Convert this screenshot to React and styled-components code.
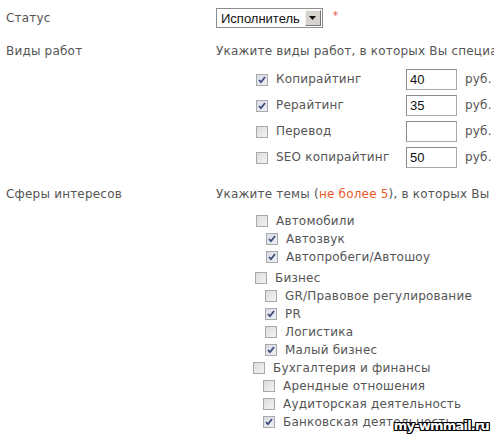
import React from 'react';
import styled, { createGlobalStyle } from 'styled-components';

const GlobalStyle = createGlobalStyle`
  html, body {
    margin: 0;
    padding: 0;
    background: #fff;
    overflow: hidden;
  }
  body {
    font-family: "DejaVu Sans", Verdana, sans-serif;
    font-size: 12px;
    letter-spacing: 0.2px;
    color: #555;
  }
`;

const Page = styled.div`
  position: relative;
  width: 494px;
  height: 435px;
  overflow: hidden;
  padding: 8px 0 0 6px;
  box-sizing: border-box;
`;

const FieldRow = styled.div`
  display: grid;
  grid-template-columns: 210px 1fr;
  align-items: ${(p) => (p.center ? 'center' : 'start')};
  margin-top: ${(p) => p.top || 0}px;
  line-height: 15px;
  white-space: nowrap;
`;

const Label = styled.div`
  color: #555;
`;

const Field = styled.div`
  display: flex;
  flex-direction: column;
  min-width: 0;
`;

const SelectBox = styled.div`
  display: flex;
  align-items: center;
  gap: 10px;
`;

const FakeSelect = styled.div`
  display: flex;
  align-items: center;
  height: 18px;
  border: 1px solid #8e8e8e;
  background: #fff;
  padding: 0 1px 0 4px;
  font-family: "Liberation Sans", Arial, sans-serif;
  font-size: 13px;
  letter-spacing: 0;
  color: #111;
  gap: 5px;
`;

const ArrowButton = styled.div`
  width: 14px;
  height: 14px;
  background: #d6d3ce;
  border: 1px solid;
  border-color: #f4f4f4 #7a7a7a #7a7a7a #f4f4f4;
  display: flex;
  align-items: center;
  justify-content: center;
`;

const Required = styled.span`
  color: #e0583a;
  font-size: 11px;
  line-height: 1;
  margin-top: -6px;
`;

const Hint = styled.div`
  color: #555;
`;

const Accent = styled.span`
  color: #e65a2a;
`;

const WorkList = styled.div`
  display: flex;
  flex-direction: column;
  gap: 5px;
  margin-top: 10px;
  padding-left: 40px;
`;

const WorkRow = styled.div`
  display: grid;
  grid-template-columns: 12px 122px 51px auto;
  column-gap: 8px;
  align-items: center;
  height: 21px;
`;

const PriceInput = styled.input`
  width: 51px;
  height: 21px;
  box-sizing: border-box;
  border: 1px solid #a8a8a8;
  border-top-color: #8a8a8a;
  border-left-color: #8a8a8a;
  padding: 0 3px;
  font-family: "Liberation Sans", Arial, sans-serif;
  font-size: 13px;
  color: #111;
  outline: none;
`;

const Currency = styled.span`
  color: #555;
`;

const Tree = styled.div`
  display: flex;
  flex-direction: column;
  margin-top: 10px;
  padding-left: ${(p) => p.indent}px;
`;

const Group = styled.div`
  display: flex;
  flex-direction: column;
  margin-top: ${(p) => p.gap || 0}px;
  margin-left: ${(p) => p.shift || 0}px;
`;

const TreeItem = styled.div`
  display: flex;
  align-items: center;
  gap: 8px;
  height: 18px;
  padding-left: ${(p) => (p.child ? 10 : 0)}px;
`;

const Box = styled.span`
  flex: none;
  width: 12px;
  height: 12px;
  box-sizing: border-box;
  border: 1px solid #a9a9a9;
  background: ${(p) =>
    p.checked
      ? 'linear-gradient(135deg, #d9dbe6 0%, #eef0f6 100%)'
      : 'linear-gradient(135deg, #dcdcdc 0%, #f3f3f3 100%)'};
  display: flex;
  align-items: center;
  justify-content: center;
`;

const Watermark = styled.div`
  position: absolute;
  right: 5px;
  bottom: 2px;
  font-family: "DejaVu Sans", sans-serif;
  font-weight: bold;
  font-size: 13px;
  letter-spacing: -0.8px;
  color: #fff;
  text-shadow: -1px -1px 0 #000, 1px -1px 0 #000, -1px 1px 0 #000,
    1px 1px 0 #000, 0 1px 0 #000, 0 -1px 0 #000, 1px 0 0 #000, -1px 0 0 #000;
`;

const Check = ({ checked }) => (
  <Box checked={checked}>
    {checked && (
      <svg width="8" height="8" viewBox="0 0 8 8">
        <path d="M1 4 L3 6.2 L7 1" fill="none" stroke="#3d4a7a" strokeWidth="1.8" />
      </svg>
    )}
  </Box>
);

const works = [
  { name: 'Копирайтинг', price: '40', checked: true },
  { name: 'Рерайтинг', price: '35', checked: true },
  { name: 'Перевод', price: '', checked: false },
  { name: 'SEO копирайтинг', price: '50', checked: false },
];

const topics = [
  {
    name: 'Автомобили',
    gap: 0,
    shift: 0,
    items: [
      { name: 'Автозвук', checked: true },
      { name: 'Автопробеги/Автошоу', checked: true },
    ],
  },
  {
    name: 'Бизнес',
    gap: 3,
    shift: -1,
    items: [
      { name: 'GR/Правовое регулирование', checked: false },
      { name: 'PR', checked: true },
      { name: 'Логистика', checked: false },
      { name: 'Малый бизнес', checked: true },
    ],
  },
  {
    name: 'Бухгалтерия и финансы',
    gap: 0,
    shift: -3,
    items: [
      { name: 'Арендные отношения', checked: false },
      { name: 'Аудиторская деятельность', checked: false },
      { name: 'Банковская деятельность', checked: true },
    ],
  },
];

const App = () => {
  return (
    <Page>
      <GlobalStyle />

      <FieldRow center>
        <Label>Статус</Label>
        <SelectBox>
          <FakeSelect>
            Исполнитель
            <ArrowButton>
              <svg width="7" height="4" viewBox="0 0 7 4">
                <path d="M0 0 H7 L3.5 4 Z" fill="#111" />
              </svg>
            </ArrowButton>
          </FakeSelect>
          <Required>*</Required>
        </SelectBox>
      </FieldRow>

      <FieldRow top={16}>
        <Label>Виды работ</Label>
        <Field>
          <Hint>Укажите виды работ, в которых Вы специализируетесь</Hint>
          <WorkList>
            {works.map((w) => (
              <WorkRow key={w.name}>
                <Check checked={w.checked} />
                <span>{w.name}</span>
                <PriceInput value={w.price} readOnly />
                <Currency>руб. за 1000 знаков</Currency>
              </WorkRow>
            ))}
          </WorkList>
        </Field>
      </FieldRow>

      <FieldRow top={19}>
        <Label>Сферы интересов</Label>
        <Field>
          <Hint>
            Укажите темы (<Accent>не более 5</Accent>), в которых Вы разбираетесь
          </Hint>
          <Tree indent={40}>
            {topics.map((g) => (
              <Group key={g.name} gap={g.gap} shift={g.shift}>
                <TreeItem>
                  <Check checked={false} />
                  <span>{g.name}</span>
                </TreeItem>
                {g.items.map((it) => (
                  <TreeItem child key={it.name}>
                    <Check checked={it.checked} />
                    <span>{it.name}</span>
                  </TreeItem>
                ))}
              </Group>
            ))}
          </Tree>
        </Field>
      </FieldRow>

      <Watermark>my-wmmail.ru</Watermark>
    </Page>
  );
};

export default App;
